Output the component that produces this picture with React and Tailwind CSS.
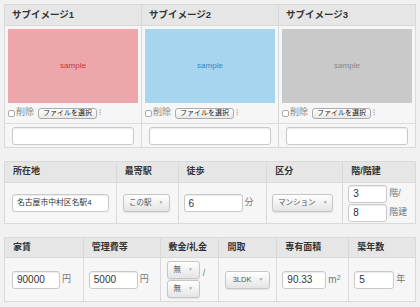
import React from 'react'

const jp = "font-['Liberation_Sans','Noto_Sans_CJK_JP',sans-serif]"

const Field = ({ value, className = '', text = 'text-[10px]' }) => (
    <div className={`flex h-[18px] items-center overflow-hidden whitespace-nowrap rounded-[3px] border border-[#c9c9c9] bg-white px-[4px] ${text} text-[#333] shadow-[inset_0_1px_1px_rgba(0,0,0,0.08)] ${className}`}>
        {value}
    </div>
)

const Select = ({ label, className = '' }) => (
    <div className={`flex h-[18px] items-center justify-center gap-[7px] rounded-[3px] border border-[#c6c6c6] bg-linear-to-b from-white to-[#e4e4e4] text-[7.5px] text-[#555] shadow-[0_1px_1px_rgba(0,0,0,0.08)] ${className}`}>
        <span>{label}</span>
        <span className="text-[5px] text-[#aaa]">▼</span>
    </div>
)

const Unit = ({ children }) => (
    <span className="ml-[2px] text-[9px] text-[#777]">{children}</span>
)

const images = [
    { title: 'サブイメージ1', bg: 'bg-[#eda6a9]', fg: 'text-[#c23a3e]' },
    { title: 'サブイメージ2', bg: 'bg-[#a8d5ee]', fg: 'text-[#3386c2]' },
    { title: 'サブイメージ3', bg: 'bg-[#c9c9c9]', fg: 'text-[#888]' },
]

const Head = ({ children, w, h = 'h-[21px]' }) => (
    <div className={`${w} ${h} flex items-center border-r border-[#d9d9d9] bg-[#e6e6e6] pl-[8px] text-[9px] font-bold text-[#333]`}>
        {children}
    </div>
)

const App = () => {
    return (
        <div className={`min-h-screen bg-[#f1f1f1] pl-[4px] pt-[4px] ${jp}`}>

            {/* Sub images */}
            <div className="flex w-[412px] border-l border-t border-b border-[#d9d9d9] bg-[#f6f6f6]">
                {images.map((img) => (
                    <div key={img.title} className="flex w-[137px] flex-col border-r border-[#d9d9d9]">
                        <div className="flex h-[21px] items-center border-b border-[#d9d9d9] bg-[#e6e6e6] pl-[7px] text-[9.5px] font-bold text-[#333]">
                            {img.title}
                        </div>
                        <div className="px-[3px] pt-[3px]">
                            <div className={`flex h-[74px] items-center justify-center ${img.bg} ${img.fg} text-[8px]`}>
                                sample
                            </div>
                        </div>
                        <div className="flex h-[21px] items-center border-b border-[#dcdcdc] pl-[3px]">
                            <span className="h-[7px] w-[7px] rounded-[2px] border border-[#aaa] bg-white"></span>
                            <span className="ml-[1px] text-[9px] text-[#888]">削除</span>
                            <span className="ml-[4px] flex h-[11px] items-center rounded-[3px] border border-[#aaa] bg-linear-to-b from-white to-[#e9e9e9] px-[4px] text-[7px] text-[#222]">
                                ファイルを選択
                            </span>
                            <span className="ml-[2px] text-[8px] leading-none text-[#666]">⁝</span>
                        </div>
                        <div className="h-[23px] px-[7px] pt-[3px]">
                            <Field value="" />
                        </div>
                    </div>
                ))}
            </div>

            {/* Location */}
            <div className="mt-[13px] w-[412px] border-l border-t border-b border-[#d9d9d9] bg-[#f6f6f6]">
                <div className="flex border-b border-[#d9d9d9]">
                    <Head w="w-[112px]" h="h-[20px]">所在地</Head>
                    <Head w="w-[62px]" h="h-[20px]">最寄駅</Head>
                    <Head w="w-[89px]" h="h-[20px]">徒歩</Head>
                    <Head w="w-[76px]" h="h-[20px]">区分</Head>
                    <Head w="w-[73px]" h="h-[20px]">階/階建</Head>
                </div>
                <div className="flex h-[40px]">
                    <div className="flex w-[112px] items-center border-r border-[#d9d9d9] pl-[7px]">
                        <Field value="名古屋市中村区名駅4" text="text-[7.8px]" className="w-[97px]" />
                    </div>
                    <div className="flex w-[62px] items-center border-r border-[#d9d9d9] pl-[6px]">
                        <Select label="この駅" className="w-[47px]" />
                    </div>
                    <div className="flex w-[89px] items-center border-r border-[#d9d9d9] pl-[5px]">
                        <Field value="6" className="w-[59px]" />
                        <Unit>分</Unit>
                    </div>
                    <div className="flex w-[76px] items-center border-r border-[#d9d9d9] pl-[5px]">
                        <Select label="マンション" className="w-[61px]" />
                    </div>
                    <div className="flex w-[73px] flex-col justify-center gap-[1px] border-r border-[#d9d9d9] pl-[5px]">
                        <div className="flex items-center">
                            <Field value="3" className="h-[17px] w-[39px]" />
                            <Unit>階/</Unit>
                        </div>
                        <div className="flex items-center">
                            <Field value="8" className="h-[17px] w-[39px]" />
                            <Unit>階建</Unit>
                        </div>
                    </div>
                </div>
            </div>

            {/* Price */}
            <div className="mt-[13px] w-[412px] border-l border-t border-b border-[#d9d9d9] bg-[#f6f6f6]">
                <div className="flex border-b border-[#d9d9d9]">
                    <Head w="w-[79px]" h="h-[19px]">家賃</Head>
                    <Head w="w-[77px]" h="h-[19px]">管理費等</Head>
                    <Head w="w-[59px]" h="h-[19px]">敷金/礼金</Head>
                    <Head w="w-[58px]" h="h-[19px]">間取</Head>
                    <Head w="w-[72px]" h="h-[19px]">専有面積</Head>
                    <Head w="w-[67px]" h="h-[19px]">築年数</Head>
                </div>
                <div className="flex h-[43px]">
                    <div className="flex w-[79px] items-center border-r border-[#d9d9d9] pl-[7px]">
                        <Field value="90000" className="w-[48px]" />
                        <Unit>円</Unit>
                    </div>
                    <div className="flex w-[77px] items-center border-r border-[#d9d9d9] pl-[5px]">
                        <Field value="5000" className="w-[49px]" />
                        <Unit>円</Unit>
                    </div>
                    <div className="flex w-[59px] items-center border-r border-[#d9d9d9] pl-[6px]">
                        <div className="flex flex-col gap-[1px]">
                            <Select label="無" className="w-[33px]" />
                            <Select label="無" className="w-[33px]" />
                        </div>
                        <span className="mb-[12px] ml-[3px] text-[9px] text-[#777]">/</span>
                    </div>
                    <div className="flex w-[58px] items-center border-r border-[#d9d9d9] pl-[6px]">
                        <Select label="3LDK" className="w-[45px]" />
                    </div>
                    <div className="flex w-[72px] items-center border-r border-[#d9d9d9] pl-[5px]">
                        <Field value="90.33" className="w-[44px]" />
                        <span className="ml-[2px] text-[10px] text-[#777]">m<sup className="text-[7px]">2</sup></span>
                    </div>
                    <div className="flex w-[67px] items-center border-r border-[#d9d9d9] pl-[5px]">
                        <Field value="5" className="w-[40px]" />
                        <Unit>年</Unit>
                    </div>
                </div>
            </div>

        </div>
    )
}

export default App
